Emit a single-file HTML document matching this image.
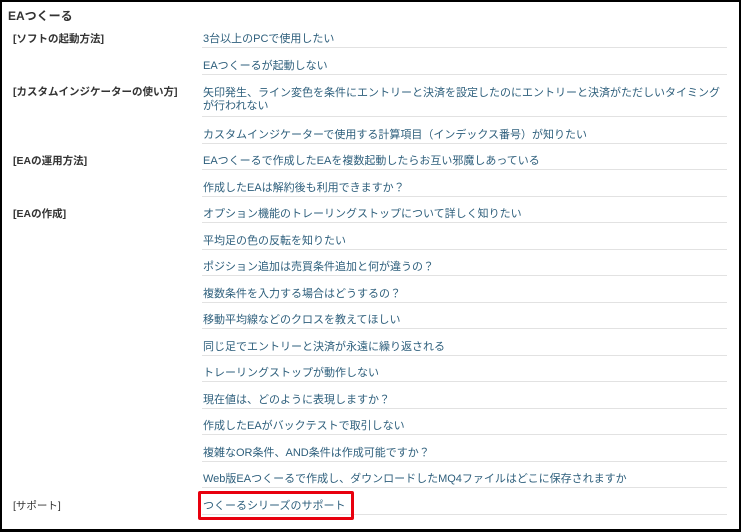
<!DOCTYPE html>
<html><head><meta charset="utf-8"><style>
body{margin:0;width:741px;height:532px;background:#fff;overflow:hidden;font-family:"Liberation Sans","Noto Sans CJK JP",sans-serif;}
.frame{position:absolute;left:0;top:0;width:737px;height:527px;border:2px solid #000;border-bottom-width:3px;}
.title{position:absolute;left:8px;top:7px;font-size:12px;font-weight:bold;color:#333;}
.rows{position:absolute;left:0;top:21.5px;width:741px;}
.row{position:relative;height:26.5px;}
.row.ml{height:42.5px;}
.lab{position:absolute;left:13px;top:10.5px;font-size:10.5px;font-weight:bold;color:#333;line-height:14px;}
.lnk{position:absolute;left:202px;right:14px;top:10.5px;bottom:0;border-bottom:1px solid #e2e2e2;font-size:11px;color:#2e5f7c;line-height:14px;padding-left:1px;}
.ml .lnk{line-height:13px;top:12.5px;}
.red{position:absolute;left:198px;top:491px;width:150px;height:23px;border:3px solid #e8000e;border-radius:2px;}
</style></head><body>
<div class="frame"></div>
<div class="title">EAつくーる</div>
<div class="rows">
<div class="row"><span class="lab">[ソフトの起動方法]</span><div class="lnk">3台以上のPCで使用したい</div></div>
<div class="row"><div class="lnk">EAつくーるが起動しない</div></div>
<div class="row ml"><span class="lab">[カスタムインジケーターの使い方]</span><div class="lnk">矢印発生、ライン変色を条件にエントリーと決済を設定したのにエントリーと決済がただしいタイミング<br>が行われない</div></div>
<div class="row"><div class="lnk">カスタムインジケーターで使用する計算項目（インデックス番号）が知りたい</div></div>
<div class="row"><span class="lab">[EAの運用方法]</span><div class="lnk">EAつくーるで作成したEAを複数起動したらお互い邪魔しあっている</div></div>
<div class="row"><div class="lnk">作成したEAは解約後も利用できますか？</div></div>
<div class="row"><span class="lab">[EAの作成]</span><div class="lnk">オプション機能のトレーリングストップについて詳しく知りたい</div></div>
<div class="row"><div class="lnk">平均足の色の反転を知りたい</div></div>
<div class="row"><div class="lnk">ポジション追加は売買条件追加と何が違うの？</div></div>
<div class="row"><div class="lnk">複数条件を入力する場合はどうするの？</div></div>
<div class="row"><div class="lnk">移動平均線などのクロスを教えてほしい</div></div>
<div class="row"><div class="lnk">同じ足でエントリーと決済が永遠に繰り返される</div></div>
<div class="row"><div class="lnk">トレーリングストップが動作しない</div></div>
<div class="row"><div class="lnk">現在値は、どのように表現しますか？</div></div>
<div class="row"><div class="lnk">作成したEAがバックテストで取引しない</div></div>
<div class="row"><div class="lnk">複雑なOR条件、AND条件は作成可能ですか？</div></div>
<div class="row"><div class="lnk">Web版EAつくーるで作成し、ダウンロードしたMQ4ファイルはどこに保存されますか</div></div>
<div class="row"><span class="lab" style="font-weight:normal">[サポート]</span><div class="lnk">つくーるシリーズのサポート</div></div>
</div>
<div class="red"></div>
</body></html>
